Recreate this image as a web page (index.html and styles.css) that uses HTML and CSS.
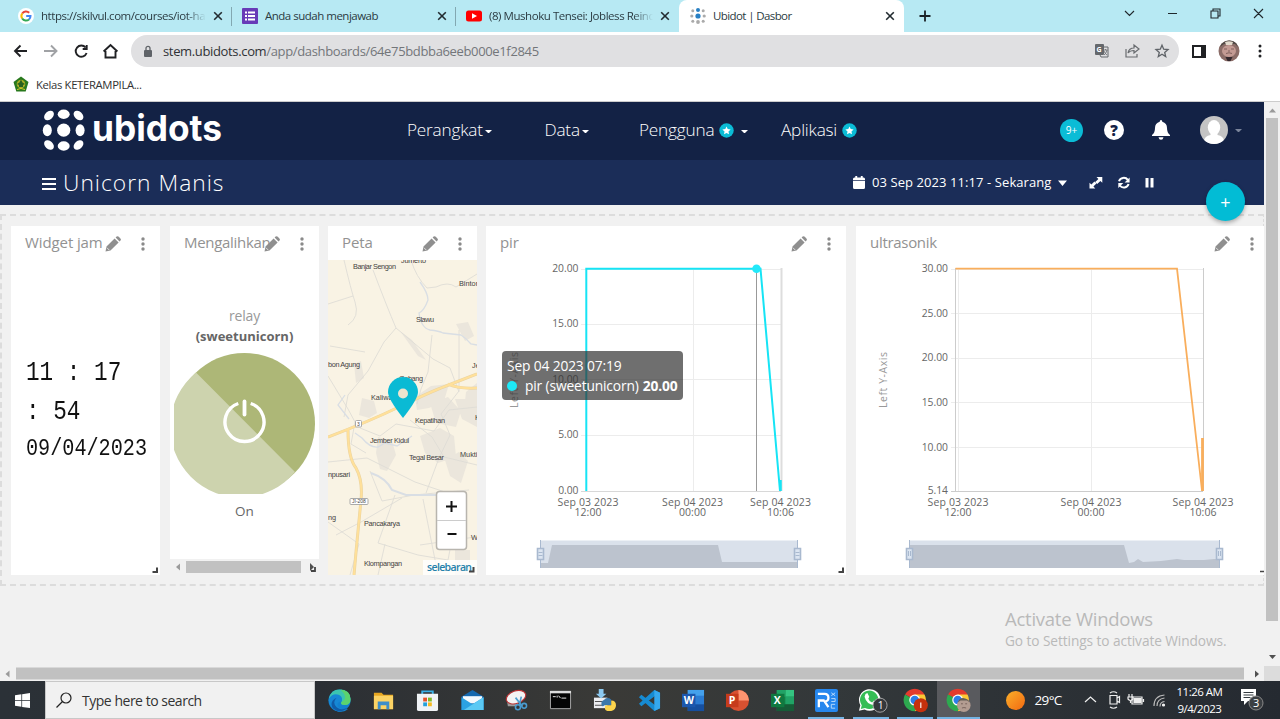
FILE: index.html
```html
<!DOCTYPE html>
<html lang="id">
<head>
<meta charset="utf-8">
<title>Ubidot | Dasbor</title>
<link rel="stylesheet" href="styles.css">
</head>
<body>
<svg class="defs" width="0" height="0">
  <defs>
    <symbol id="x" viewBox="0 0 10 10"><path d="M1.2 1.2l7.6 7.6M8.8 1.2L1.2 8.8" stroke="#222b30" stroke-width="1.6"/></symbol>
    <symbol id="pencil" viewBox="0 0 16 16"><path d="M.5 15.5l1-5L9.600 2.500l4 4L5.500 14.500zM10.600 1.600l1-1q1.100-.8 2.200.2l1.600 1.600q1 1.100.1 2.100l-1 1z" fill="#8f8f8f"/><path d="M2 11.800l2.300 2.300" stroke="#fff" stroke-width=".7"/></symbol>
    <symbol id="dots" viewBox="0 0 4 14"><g fill="#8a8a8a"><circle cx="2" cy="2" r="1.700"/><circle cx="2" cy="7" r="1.700"/><circle cx="2" cy="12" r="1.700"/></g></symbol>
    <symbol id="badge" viewBox="0 0 16 16"><circle cx="8" cy="8" r="7.700" fill="#0bbcd6"/><path d="M8 3.700l1.300 2.800 3.100.4-2.300 2.100.6 3.100L8 10.600l-2.700 1.500.6-3.100-2.300-2.100 3.100-.4z" fill="#fff"/></symbol>
    <symbol id="chrome" viewBox="0 0 24 24"><path d="M12 12L2.100 6.300A11.500 11.500 0 0 1 22 6.300z" fill="#e33b2e"/><path d="M12 12L2.100 6.300A11.500 11.500 0 0 0 12 23.500l5-8.500z" fill="#2da94f"/><path d="M22 6.300H12l5 8.700-5 8.500A11.500 11.500 0 0 0 22 6.300z" fill="#fcc934"/><circle cx="12" cy="12" r="5.600" fill="#fff"/><circle cx="12" cy="12" r="4.400" fill="#2b7de9"/></symbol>
    <symbol id="grip" viewBox="0 0 6 6"><path d="M5 .5V5H.5" fill="none" stroke="#444" stroke-width="2"/></symbol>
  </defs>
</svg>

<header class="tabs">
  <div class="tab t1"><svg class="fav" viewBox="0 0 16 16"><circle cx="8" cy="8" r="8" fill="#fff"/><g fill="none" stroke-width="2"><path d="M4.200 5.500A4.500 4.500 0 0 1 11.200 4.700" stroke="#ea4335"/><path d="M4.200 5.500a4.500 4.500 0 0 0 0 5" stroke="#fbbc05"/><path d="M4.200 10.500a4.500 4.500 0 0 0 6.800.9" stroke="#34a853"/><path d="M11 11.400A4.500 4.500 0 0 0 12.500 8H8.200" stroke="#4285f4"/></g></svg><span class="label fade">https://skilvul.com/courses/iot-ha</span><svg class="close"><use href="#x"/></svg></div>
  <div class="tab t2"><svg class="fav" viewBox="0 0 16 16"><rect width="16" height="16" rx="1" fill="#673ab7"/><path d="M3 4.500h2M3 8h2M3 11.500h2M6 4.500h7M6 8h7M6 11.500h7" stroke="#fff" stroke-width="1.800"/></svg><span class="label">Anda sudah menjawab</span><svg class="close"><use href="#x"/></svg></div>
  <div class="tab t3"><svg class="fav" viewBox="0 0 16 16"><rect y="2.500" width="16" height="11" rx="2.500" fill="#f00"/><path d="M6 5.300l5 2.700-5 2.700z" fill="#fff"/></svg><span class="label fade">(8) Mushoku Tensei: Jobless Reinc</span><svg class="close"><use href="#x"/></svg></div>
  <div class="tab t4"><svg class="fav" viewBox="0 0 16 16"><g fill="#aaa"><circle cx="2.800" cy="2.800" r="1.500"/><circle cx="13.200" cy="2.800" r="1.500"/><circle cx="1.800" cy="8" r="1.600"/><circle cx="14.200" cy="8" r="1.600"/><circle cx="2.800" cy="13.200" r="1.500"/><circle cx="13.200" cy="13.200" r="1.500"/><circle cx="8" cy="14" r="1.900"/></g><circle cx="8" cy="2" r="2" fill="#2980c4"/><circle cx="8" cy="8" r="2.600" fill="#2980c4"/></svg><span class="label">Ubidot | Dasbor</span><svg class="close"><use href="#x"/></svg></div>
  <svg class="plus" viewBox="0 0 12 12"><path d="M6 .5v11M.5 6h11" stroke="#1b2226" stroke-width="1.800"/></svg>
  <svg class="winctl" viewBox="0 0 150 28" fill="none" stroke="#20282c" stroke-width="1.100"><path d="M5 11l4.500 4.500L14 11M48 13.500h9M91 11h7v7h-7zM93 11V9h7v7h-2M134 9l9 9M143 9l-9 9"/></svg>
</header>

<div class="toolbar">
  <svg class="navicons" viewBox="0 0 120 32" fill="none" stroke="#202124" stroke-width="1.900"><path d="M15 16h12M20.500 10.500L15 16l5.500 5.500"/><path d="M44 16h12M51 10.500l5.500 5.500-5.500 5.500" stroke="#a0a2a5"/><path d="M85.600 12.500A5.600 5.600 0 1 0 86.600 18M86.700 10v4h-4"/><path d="M105.500 16v6.500h10V16M103.600 16.500l6.900-6.500 6.900 6.500"/></svg>
  <div class="omnibox">
    <svg class="lock" viewBox="0 0 10 13"><rect x="1" y="5" width="8" height="7" rx="1" fill="#5f6368"/><path d="M3 5V3.300a2 2 0 0 1 4 0V5" fill="none" stroke="#5f6368" stroke-width="1.300"/></svg>
    <span class="url"><b>stem.ubidots.com</b>/app/dashboards/64e75bdbba6eeb000e1f2845</span>
    <svg class="omniicons" viewBox="0 0 80 16"><rect x="1" y="1" width="9" height="11" rx="1" fill="#65686c"/><path d="M8 4h6v10H7l-1-2" fill="none" stroke="#65686c"/><text x="2.500" y="9" class="gx">G</text><path d="M9.500 7h4M11.500 6v1M13 7q-1 4-3 5M10 8q1 3 3 4" stroke="#65686c" stroke-width=".8" fill="none"/><path d="M32 6v8h11v-3M34 10q1-5 6-5V2l5 4-5 4V7.500Q36 7.500 34 10z" fill="none" stroke="#686b6f" stroke-width="1.200"/><path d="M68 2.200l1.700 4 4.300.3-3.300 2.900 1 4.200L68 11.300l-3.700 2.300 1-4.200L62 6.500l4.300-.3z" fill="none" stroke="#5f6368" stroke-width="1.300"/></svg>
  </div>
  <svg class="panel" viewBox="0 0 14 13"><path d="M1 1h12v11H1z" fill="#fff" stroke="#202124" stroke-width="2"/><path d="M9 1h4v11H9z" fill="#202124"/></svg>
  <svg class="face" viewBox="0 0 22 22"><circle cx="11" cy="11" r="10.500" fill="#8b6c67"/><path d="M2 7q2-6 9-6.500T20 7l-3-3H6z" fill="#504a46"/><path d="M7 2q4-1.500 8 0l-1 3H8z" fill="#e2d9cc"/><ellipse cx="11" cy="11" rx="7" ry="6" fill="#c39a93"/><path d="M6 9h3M13 9h3M8 13.500q3-1.500 6 0M10 11h2" stroke="#80605c" stroke-width="1" fill="none"/><path d="M7.500 17h7l-2 4h-3z" fill="#34282d"/></svg>
  <svg class="kebab" viewBox="0 0 4 14"><circle cx="2" cy="2" r="1.500"/><circle cx="2" cy="7" r="1.500"/><circle cx="2" cy="12" r="1.500"/></svg>
</div>
<div class="bookmarks">
  <svg viewBox="0 0 16 16"><path d="M8 .5l7.500 5.600-2.800 9.400H3.300L.5 6.100z" fill="#28791d"/><circle cx="8" cy="8" r="4.300" fill="#a8ae25"/><path d="M8 3.500l1.500 3L12 8l-2 1v2H6V9L4 8l2.500-1.500z" fill="#28621f"/><path d="M4 13.500q4-2 8 0" stroke="#d8c829" fill="none"/></svg><span>Kelas KETERAMPILA...</span>
</div>

<main class="viewport">
  <div class="page">
    <nav class="nav">
      <svg class="logo" viewBox="40 102 190 56"><g fill="#fff"><ellipse cx="63.700" cy="114.300" rx="6" ry="4.700"/><circle cx="63.700" cy="130.200" r="6.600"/><ellipse cx="63.700" cy="146" rx="6" ry="4.700"/><ellipse cx="47.300" cy="130.200" rx="4.500" ry="6"/><ellipse cx="80.100" cy="130.200" rx="4.500" ry="6"/><ellipse cx="49" cy="115.500" rx="5.600" ry="3.900" transform="rotate(-42 49 115.500)"/><ellipse cx="78.500" cy="115.500" rx="5.600" ry="3.900" transform="rotate(42 78.500 115.500)"/><ellipse cx="49" cy="145" rx="5.600" ry="3.900" transform="rotate(42 49 145)"/><ellipse cx="78.500" cy="145" rx="5.600" ry="3.900" transform="rotate(-42 78.500 145)"/><text x="92" y="140.500" textLength="130" lengthAdjust="spacingAndGlyphs" class="brand">ubidots</text></g></svg>
      <a>Perangkat<i class="caret"></i></a>
      <a>Data<i class="caret"></i></a>
      <a>Pengguna<svg class="badge"><use href="#badge"/></svg><i class="caret gap"></i></a>
      <a>Aplikasi<svg class="badge"><use href="#badge"/></svg></a>
      <span class="nine">9+</span>
      <span class="help">?</span>
      <svg class="bell" viewBox="0 0 18 20"><path d="M9 0q1.300 0 1.300 1.700Q15 3 15 8q0 5 3 7v1H0v-1q3-2 3-7 0-5 4.700-6.300Q7.700 0 9 0zM6.500 17.300h5Q11 19.800 9 19.800t-2.500-2.500z" fill="#fff"/></svg>
      <svg class="avatar" viewBox="0 0 28 28"><clipPath id="av"><circle cx="14" cy="14" r="14"/></clipPath><g clip-path="url(#av)"><path d="M0 0h28v28H0z" fill="#c4c4c4"/><ellipse cx="14" cy="11.500" rx="6.200" ry="7.500" fill="#fff"/><path d="M10.500 16h7v3q6 1 6.500 6l-3 4H7l-3-4q.5-5 6.500-6z" fill="#fff"/></g></svg>
      <i class="caret dim"></i>
    </nav>
    <div class="subbar">
      <svg class="burger" viewBox="0 0 14 12"><path d="M0 1h14M0 6h14M0 11h14" stroke="#fff" stroke-width="1.900"/></svg>
      <h1>Unicorn Manis</h1>
      <svg class="cal" viewBox="0 0 12 13"><path d="M0 3q0-1.500 1.500-1.500H2.300V0h1.900v1.500h3.600V0h1.900v1.500h.8Q12 1.500 12 3v1.200H0zM0 5h12v6.500q0 1.500-1.500 1.500h-9Q0 13 0 11.500z" fill="#fff"/></svg>
      <span class="range">03 Sep 2023 11:17 - Sekarang</span>
      <svg class="subicons" viewBox="1056 174 104 18"><g fill="#fff"><path d="M1058 180.500h9l-4.500 5.500zM1096.500 177h5.800v5.800l-1.900-1.900-3.200 3.200-2-2 3.200-3.200zM1089.500 188.500v-5.800l1.900 1.900 3-3 2 2-3 3 1.900 1.900zM1145.500 178h3v9.500h-3zM1150.500 178h3v9.500h-3z"/></g><path d="M1119 181.300a5 5 0 0 1 8.800-1.400M1128.600 184a5 5 0 0 1-8.800 1.500" fill="none" stroke="#fff" stroke-width="2"/><path d="M1129.600 177.500v5h-5zM1118.300 188v-5h5z" fill="#fff"/></svg>
      <button class="fab">+</button>
    </div>

    <section class="board">
      <article class="card clock">
        <h2>Widget jam</h2><svg class="pencil"><use href="#pencil"/></svg><svg class="more"><use href="#dots"/></svg>
        <div class="body"><p>11 : 17</p><p>: 54</p><p class="date">09/04/2023</p></div>
        <svg class="grip"><use href="#grip"/></svg>
      </article>

      <article class="card toggle">
        <h2>Mengalihkan</h2><svg class="pencil"><use href="#pencil"/></svg><svg class="more"><use href="#dots"/></svg>
        <div class="body">
          <p class="dev">relay</p><p class="dev strong">(sweetunicorn)</p>
          <svg class="power" viewBox="0 0 141 141"><circle cx="70.500" cy="70.500" r="70.500" fill="#adb777"/><path d="M22 19.500A70.500 70.500 0 1 0 121 119z" fill="#cdd3ae"/><path d="M64.300 50.500a19.500 19.500 0 1 0 12.400 0" fill="none" stroke="#fff" stroke-width="3.400"/><path d="M70.500 48.500v13" stroke="#fff" stroke-width="3.800" stroke-linecap="round"/></svg>
          <p class="state">On</p>
        </div>
        <svg class="innerscroll" viewBox="0 0 149 16"><path d="M0 0h149v16H0z" fill="#f1f1f1"/><path d="M10 4.500v7L6 8z" fill="#9b9b9b"/><path d="M16 2h115v12H16z" fill="#c1c1c1"/><path d="M140 4v8l4-4z" fill="#505050"/><path d="M145 8v4h-4" fill="none" stroke="#444" stroke-width="1.800"/></svg>
      </article>

      <article class="card">
        <h2>Peta</h2><svg class="pencil"><use href="#pencil"/></svg><svg class="more"><use href="#dots"/></svg>
        <div class="body map">
          <svg viewBox="328 260 149 315" width="149" height="315">
            <path d="M328 260h149v315H328z" fill="#f9f3e4"/>
            <g fill="#ebe6dc"><path d="M362 398l12 3 3 12-8 5-10-3zM378 437l14 4 4 14-9 16-7-2-4-16zM415 397l16-11 18-2-5 17-15 7-12 2zM420 436l20-8 14 8 2 21-18 6-13-10zM455 399h22v28l-15-8zM430 403l18-6 13 14-5 16-20-4zM445 460l14-8 9 9-7 22-11-7zM456 324l12-2 6 14-9 5zM354 364l7-3 3 17-8 5zM466 392l11-9v31l-13-4zM400 331l12 9 14 20-8-4zM455 550h15v25h-15z"/></g>
            <g fill="none" stroke="#dfdcd6" stroke-width=".9"><path d="M344 260q7 30 11 42 5 15-7 23M373 270q14 37 23 58l37 31 17 9 9 24M411 260q5 17 16 28l9-1q12-6 20 0l21-13M432 335l-4 37-7 17-4 15M396 328l-12 14-16 29-20 24-4 22M328 376l20 33 7 13-4 22 15 9M459 330v61l-18 23 9 21-11 23-13 35M477 407l-28 3-15 21-38-7-16 12-20-8M410 420l22 17 12 20 33 8M328 462l39-4 48 24 30 10M395 495l-17 48 40 12 30 5 11-57M402 498l-41 24-25 13M423 499l15 76M328 304l25-8M365 352l-35-6M370 471l12 30 32-6 55-5M328 522l31 22-9 31M385 544l-7 31M420 545l55-8"/></g>
            <g fill="none" stroke="#d9dee4" stroke-width="1.300"><path d="M420 282q8 11 8 18-4 11-9 13 2 15 11 17 9 1 13 3l18 2q5 3 10 9l6 1M345 395l-7 10 11 14M355 433l7 5q8 10 16 9l7-4 12 3 15-10"/><path d="M371 473q15 5 21 17l14 5h31" stroke-width="2"/></g>
            <g fill="none"><path d="M328 437q40-15 73-31 29-14 45-20l31-12M448 384q10 5 29 4M348 430q0 28 8 38 7 13 5 32l-5 52-2 23" stroke="#e9d3a1" stroke-width="3"/><path d="M328 437q40-15 73-31 29-14 45-20l31-12M448 384q10 5 29 4M348 430q0 28 8 38 7 13 5 32l-5 52-2 23" stroke="#ffe09a" stroke-width="2"/></g>
            <g fill="#fff" stroke="#aaa"><rect x="355.500" y="420.500" width="6" height="6.500" rx="1"/><rect x="350" y="498.500" width="18" height="6" rx="1"/></g>
            <g class="maptext"><text x="401" y="262.500" textLength="25">Jumerto</text><text x="353" y="268.500" textLength="43">Banjar Sengon</text><text x="459" y="286">Bintoro</text><text x="416" y="322" textLength="18">Slawu</text><text x="328" y="367" textLength="32">bon Agung</text><text x="472" y="368">Je</text><text x="399" y="380.500" textLength="24">Gebang</text><text x="371" y="399.500">Kaliwates</text><text x="415" y="423" textLength="30">Kepatihan</text><text x="475" y="420">K</text><text x="370" y="443" textLength="39">Jember Kidul</text><text x="409" y="459.500" textLength="35">Tegal Besar</text><text x="460" y="457">Muktiharjo</text><text x="328" y="476.500" textLength="22">npusari</text><text x="328" y="520">ng</text><text x="364" y="525.500" textLength="36">Pancakarya</text><text x="471" y="540">W</text><text x="364" y="566" textLength="38">Klompangan</text><text x="357" y="425.500" class="shield">3</text><text x="352" y="503.300" class="shield">JI-208</text></g>
            <path d="M403 418q-15-19-15-26a15 15 0 0 1 30 0q0 7-15 26z" fill="#0abad4"/><circle cx="403" cy="393.500" r="5" fill="#eee4ce"/>
            <rect x="436.500" y="491.500" width="30" height="58" rx="3" fill="#fff" stroke="#b8b5ae" stroke-width="1.500"/><path d="M437 520.500h29" stroke="#ccc"/><path d="M446 506.500h11M451.500 501v11M447.500 534h9" stroke="#111" stroke-width="2"/>
            <path d="M423 560h54v15h-54z" fill="#fff" opacity=".8"/><text x="427" y="571" textLength="45" class="leaflet">selebaran</text><path d="M473.500 567v4.500H469" fill="none" stroke="#444" stroke-width="2"/>
          </svg>
        </div>
      </article>

      <article class="card chart pir">
        <h2>pir</h2><svg class="pencil"><use href="#pencil"/></svg><svg class="more"><use href="#dots"/></svg>
        <div class="body">
          <svg viewBox="486 260 360 315" width="360" height="315">
            <g stroke="#ececec"><path d="M581 269.500h200M581 324.500h200M581 379.500h200M581 435.500h200M693.500 269v222"/><path d="M581 491.500h200" stroke="#d8d8d8"/><path d="M781.500 268v223" stroke="#ddd" stroke-width="2"/></g>
            <g class="ylab"><text x="578.500" y="272">20.00</text><text x="578.500" y="327">15.00</text><text x="578.500" y="382.500">10.00</text><text x="578.500" y="438">5.00</text><text x="578.500" y="493.500">0.00</text></g>
            <g class="xlab"><text x="588" y="506" textLength="61">Sep 03 2023</text><text x="588" y="516">12:00</text><text x="692.500" y="506" textLength="61">Sep 04 2023</text><text x="692.500" y="516">00:00</text><text x="780.500" y="506" textLength="61">Sep 04 2023</text><text x="780.500" y="516">10:06</text></g>
            <text class="axis" transform="translate(518 380) rotate(-90)" textLength="56">Left Y-Axis</text>
            <path d="M756.500 269v222" stroke="#999"/>
            <path d="M586.300 491V268.700H760.500L780 491" fill="none" stroke="#16e4f5" stroke-width="2"/><path d="M780.500 480v11" stroke="#16e4f5" stroke-width="2.500"/><circle cx="756.500" cy="268.800" r="4.300" fill="#22e9fa"/>
            <path d="M540 540.500h258V568H540z" fill="#dae1eb"/><path d="M540 563h8l4-18h166l4 17h76v6H540z" fill="#bcc3ce"/><g stroke="#a9b9cf" fill="#dce5f1"><path d="M540.500 540v28M797.500 540v28"/><path d="M537.500 548.500h6v11h-6zM794.500 548.500h6v11h-6z" stroke-width="1.600"/><path d="M538.500 552.500h4M538.500 555.500h4M795.500 552.500h4M795.500 555.500h4"/></g>
          </svg>
          <div class="tooltip"><p>Sep 04 2023 07:19</p><p class="row"><i></i><span>pir (sweetunicorn)</span> <b>20.00</b></p></div>
        </div>
        <svg class="grip"><use href="#grip"/></svg>
      </article>

      <article class="card chart ultra">
        <h2>ultrasonik</h2><svg class="pencil"><use href="#pencil"/></svg><svg class="more"><use href="#dots"/></svg>
        <div class="body">
          <svg viewBox="856 260 408 315" width="408" height="315">
            <g stroke="#ececec"><path d="M951 269.500h252M951 313.500h252M951 358.500h252M951 402.500h252M951 447.500h252M1091.500 269v222M958.500 269v222"/><path d="M951 491.500h252M955.500 268v223M1203.500 268v223" stroke="#ccc"/></g>
            <g class="ylab"><text x="948" y="272">30.00</text><text x="948" y="316.500">25.00</text><text x="948" y="361">20.00</text><text x="948" y="406">15.00</text><text x="948" y="450.500">10.00</text><text x="948" y="493.500">5.14</text></g>
            <g class="xlab"><text x="958" y="506" textLength="61">Sep 03 2023</text><text x="958" y="516">12:00</text><text x="1091" y="506" textLength="61">Sep 04 2023</text><text x="1091" y="516">00:00</text><text x="1203" y="506" textLength="61">Sep 04 2023</text><text x="1203" y="516">10:06</text></g>
            <text class="axis" transform="translate(887 380) rotate(-90)" textLength="56">Left Y-Axis</text>
            <path d="M955.500 268.700H1177L1202 490.500" fill="none" stroke="#f9ae5c" stroke-width="1.800"/><path d="M1202.500 438v53" stroke="#f9ae5c" stroke-width="2.800"/>
            <path d="M909 540.500h311V568H909z" fill="#dae1eb"/><path d="M909 545h215l5 18 5-1 4-3 5 3 18-1 8-1 8-1 7 1h20l10-1h6V568H909z" fill="#bcc3ce"/><g stroke="#a9b9cf" fill="#dce5f1"><path d="M909.500 540v28M1219.500 540v28"/><path d="M906.500 548.500h6v11h-6zM1216.500 548.500h6v11h-6z" stroke-width="1.600"/><path d="M908.500 551v5M910.500 551v5M1218.500 551v5M1220.500 551v5"/></g>
            <path d="M1260 571.500h4" stroke="#444" stroke-width="1.500"/>
          </svg>
        </div>
      </article>
    </section>
    <aside class="activate"><p>Activate Windows</p><small>Go to Settings to activate Windows.</small></aside>
  </div>
  <svg class="vbar" viewBox="0 0 16 563"><path d="M0 0h16v563H0z" fill="#f1f1f1"/><path d="M5 10.500h7L8.500 6.500z" fill="#9a9a9a"/><path d="M2 16h12v503H2z" fill="#c1c1c1"/><path d="M5 553h7l-3.500 4z" fill="#505050"/></svg>
  <svg class="hbar" viewBox="0 0 1280 16"><path d="M0 0h1280v16H0z" fill="#f1f1f1"/><path d="M9.500 4.500v7l-4-3.500z" fill="#9a9a9a"/><path d="M16 1.500h1228v12H16z" fill="#c1c1c1"/><path d="M1255 4.500v7l4-3.500z" fill="#505050"/><path d="M1264 0h16v16h-16z" fill="#dcdcdc"/></svg>
</main>

<footer class="taskbar">
  <div class="start"><svg viewBox="0 0 16 16" width="15" height="15"><path d="M0 2.300l6.800-1v6.300H0zM7.600 1.200L16 0v7.600H7.600zM0 8.400h6.800v6.300L0 13.700zM7.600 8.400H16V16l-8.400-1.200z" fill="#fff"/></svg></div>
  <div class="search"><svg viewBox="0 0 16 16"><circle cx="10" cy="6" r="5" fill="none" stroke="#222" stroke-width="1.200"/><path d="M6.500 9.500L.5 15.500" stroke="#222" stroke-width="1.300"/></svg><span>Type here to search</span></div>
  <div class="apps">
    <div><svg viewBox="0 0 24 24"><circle cx="12" cy="12" r="11.500" fill="#1280cf"/><path d="M1 10Q3 .5 12 .5q11 0 11.500 10 0 6-6 6-5 0-3.500-3 2-5-3-6Q5 7 1 12z" fill="#3bc5b0"/><path d="M13 .6q10.500 1 10.500 10 0 6-6 6-5 0-3.500-3 8-4-1-13z" fill="#5bd36e"/><path d="M1 10q4-6 10-4 5 2 3 7-3 0-4 2-1 5 6 6h5Q12 27 5 20 0 15 1 10z" fill="#1688d5"/><path d="M9 9q-5 5 0 10 5 4 12 0-8 8-16 1-4-7 4-11z" fill="#105ca8"/></svg></div>
    <div><svg viewBox="0 0 24 24"><path d="M2 4h8l2 2h10v15H2z" fill="#e7a620"/><path d="M2 7h20v14H2z" fill="#fcd364"/><path d="M6 21v-8h12v8h-3v-4H9v4z" fill="#3e8ec9"/></svg></div>
    <div><svg viewBox="0 0 24 24"><path d="M6.500 7V2.500h11V7" fill="none" stroke="#39b1e8" stroke-width="2"/><path d="M1 5h22v16q0 2-2 2H3q-2 0-2-2z" fill="#f0f3f6"/><path d="M7.500 9h4v4h-4z" fill="#e4532a"/><path d="M12.500 9h4v4h-4z" fill="#80b928"/><path d="M7.500 14h4v4h-4z" fill="#24a0da"/><path d="M12.500 14h4v4h-4z" fill="#f6b91e"/></svg></div>
    <div><svg viewBox="0 0 24 24"><path d="M.5 8L12 1l11.500 7v14H.5z" fill="#1568ae"/><path d="M2 7.500h20V15H2z" fill="#f4f9fd"/><path d="M.5 8.500L12 16l11.500-7.500V22H.5z" fill="#2ba2e3"/><path d="M23.500 8.500V22H3z" fill="#5bc9f4"/></svg></div>
    <div><svg viewBox="0 0 24 24"><path d="M2 12l1 6h9l3-5z" fill="#9a9a9a"/><ellipse cx="11.500" cy="8.500" rx="10.500" ry="6.500" fill="#f4f4f4" stroke="#b93335" stroke-width="1.200" transform="rotate(-20 11.500 8.500)"/><path d="M11 9l7 9M17 8l-2 9" stroke="#4c9fd1" stroke-width="1.700"/><circle cx="13.500" cy="19" r="2.600" fill="none" stroke="#4a9bd0" stroke-width="1.600"/><circle cx="20" cy="17.500" r="2.500" fill="none" stroke="#4a9bd0" stroke-width="1.600"/></svg></div>
    <div><svg viewBox="0 0 24 24"><path d="M1.500 2.500h21v18h-21z" fill="#050505" stroke="#aaa"/><path d="M1 2h22v2.500H1z" fill="#ddd"/><path d="M4 8h3M8.500 7v2M10 7l2 2.500M13 9.500h5" stroke="#eee"/></svg></div>
    <div><svg viewBox="0 0 24 24"><path d="M1 9h14v11H1z" fill="#ecedf0"/><path d="M2 13h8M2 17h8" stroke="#555" stroke-width="1.200"/><path d="M6 0h5v5h3l-5.500 5L3 5h3z" fill="#8cc9f0"/><path d="M12 11q3-3 7 0v6h-7q-4 3-3-4z" fill="#3c78aa"/><path d="M13 17h6v-5q5 0 5 5t-5 6h-4q-4-1-2-6z" fill="#fcd44d"/></svg></div>
    <div><svg viewBox="0 0 24 24"><path d="M17 1l6 3v16l-6 3L1 8.500 3.500 6 18 17V7L3.500 18 1 15.500z" fill="#168bd2"/><path d="M17 1l6 3v16l-6 3z" fill="#35a8ee"/></svg></div>
    <div><svg viewBox="0 0 24 24"><path d="M6 1h17v22H6z" fill="#2b7cd3"/><path d="M6 1h17v6H6z" fill="#45a1ec"/><path d="M6 16h17v7H6z" fill="#164f9f"/><path d="M0 5h14v14H0z" fill="#1c57ad"/><text x="1.800" y="16" class="ico">W</text></svg></div>
    <div><svg viewBox="0 0 24 24"><circle cx="13" cy="12" r="11" fill="#d85131"/><path d="M13 1a11 11 0 0 1 11 11H13z" fill="#ff9470"/><path d="M0 5h13v14H0z" fill="#c63b1c"/><text x="2.800" y="16" class="ico">P</text></svg></div>
    <div><svg viewBox="0 0 24 24"><path d="M6 1h18v22H6z" fill="#148449"/><path d="M15 1h9v7h-9z" fill="#35c481"/><path d="M6 1h9v7H6zM15 8h9v8h-9z" fill="#21a366"/><path d="M6 16h18v7H6z" fill="#165c37"/><path d="M0 5h14v14H0z" fill="#107940"/><text x="2.800" y="16" class="ico">X</text></svg></div>
    <div class="open"><svg viewBox="0 0 24 24"><rect width="24" height="24" rx="2" fill="#2687ee"/><path d="M3 5h7q4 0 4 4t-4 4l4 6M4 19V12h6" fill="none" stroke="#fff" stroke-width="2.400"/><path d="M17 4l4 3M21 4l-4 3M17 10h4v3h-4M21 16h-4v4h4" fill="none" stroke="#b9d9fa" stroke-width="1"/></svg></div>
    <div class="open"><svg class="wide" viewBox="0 0 32 26"><path d="M1 24l1.500-6A11.500 11.500 0 1 1 7 22.500z" fill="#fff"/><path d="M3 22l1-4a9.800 9.800 0 1 1 3.500 3z" fill="#35bd55"/><path d="M8 6l2-1 2 4-1 2q1 3 4 4l2-2 4 2q0 3-4 3-8-1-10-9z" fill="#fff"/><circle cx="23.500" cy="18" r="7.500" fill="#35383c" stroke="#aaa"/><text x="21" y="22" class="count">1</text></svg></div>
    <div class="open"><svg class="wide" viewBox="0 0 32 26"><use href="#chrome" x="0" y="0" width="25" height="25"/><circle cx="19" cy="18" r="7.500" fill="#c5300d"/><path d="M19 15v6" stroke="#fff" stroke-width="1.200"/></svg></div>
    <div class="open active"><svg class="wide" viewBox="0 0 32 26"><use href="#chrome" x="0" y="0" width="25" height="25"/><circle cx="19" cy="18" r="7.200" fill="#b39c91"/><path d="M12.500 15q2-5 6.500-4.500t6.500 4.500l-3-2h-7z" fill="#655f57"/><path d="M16 16.500h2M20.500 16.500h2M17 21q2-1 4.500 0" stroke="#75605a" fill="none"/></svg></div>
  </div>
  <i class="sun"></i><span class="temp">29°C</span>
  <svg class="tray" viewBox="1080 685 92 32" fill="none" stroke="#eee" stroke-width="1.200"><path d="M1086 703l5.500-5 5.500 5M1111 696.500h7v8.500h-7zM1118 699l2.500-1.500v6L1118 702M1111 694q3.500-2.500 7 0M1111 708q3.500 2.500 7 0M1133 698h10v7h-10zM1144.500 700v3"/><path d="M1135 699.500h7v4h-7z" fill="#eee"/><path d="M1130 695v3M1133 695v3M1129 698h5v2q-2.500 3-5 0zM1131.500 701v3" /><g stroke="#bbb"><path d="M1155 707q0-10 10.500-11M1158 707q0-7 7.500-8M1161 707.500q0-4.500 4.500-5"/></g><circle cx="1164.500" cy="706" r="1" fill="#fff"/></svg>
  <div class="time">11:26 AM<br>9/4/2023</div>
  <svg class="notif" viewBox="0 0 26 26"><path d="M1 2h15v12H8l-4 4v-4H1z" fill="#fff"/><path d="M3.500 5.500h10M3.500 8h10M3.500 10.500h7" stroke="#333a3f"/><circle cx="16" cy="16" r="7" fill="#3b3f43" stroke="#888"/><text x="13" y="20" class="count">3</text></svg>
</footer>
</body>
</html>
```
FILE: styles.css
```css
* { box-sizing: border-box; }
body { margin: 0; width: 1280px; height: 719px; overflow: hidden; display: flex; flex-direction: column; background: #fff; font-family: "Open Sans", "Noto Sans", sans-serif; color: #333; }
p, h1, h2 { margin: 0; font-weight: 400; }
svg { display: block; flex: none; }
.defs { position: absolute; }

.tabs { height: 32px; flex: none; background: #b7e9f3; display: flex; align-items: center; font-size: 11.5px; letter-spacing: -.45px; }
.tab { height: 32px; display: flex; align-items: center; position: relative; white-space: nowrap; }
.t1 { width: 232px; padding-left: 18px; }
.t2 { width: 224px; padding-left: 10px; letter-spacing: -.5px; }
.t3 { width: 223px; padding-left: 10px; }
.t4 { width: 225px; padding-left: 11px; background: #fff; border-radius: 8px 8px 0 0; letter-spacing: -.6px; }
.t1::after, .t2::after { content: ""; width: 1px; height: 19px; background: #82a8b1; position: absolute; right: 0; top: 7px; }
.fav { width: 16px; height: 16px; margin-right: 7px; }
.label { flex: 1; overflow: hidden; color: #2b3b42; padding-bottom: 1px; }
.fade { -webkit-mask-image: linear-gradient(90deg, #000 88%, transparent); mask-image: linear-gradient(90deg, #000 88%, transparent); }
.close { width: 10px; height: 10px; margin: 0 9px 0 7px; }
.plus { width: 12px; height: 12px; margin-left: 15px; }
.winctl { width: 150px; height: 28px; margin: 0 10px 4px auto; }

.toolbar { height: 37px; flex: none; display: flex; align-items: center; padding-top: 1px; }
.navicons { width: 120px; height: 32px; }
.omnibox { margin-left: 11px; width: 1048px; height: 32px; background: #e0e0e2; border-radius: 16px; display: flex; align-items: center; padding: 0 5px 0 12px; }
.lock { width: 10px; height: 13px; margin-right: 10px; }
.url { font-size: 13px; letter-spacing: -.35px; color: #73767a; }
.url b { font-weight: 400; color: #303236; }
.omniicons { width: 80px; height: 16px; margin-left: auto; }
.gx { font-size: 7px; font-weight: 700; fill: #fff; }
.panel { width: 14px; height: 13px; margin-left: 13px; }
.face { width: 22px; height: 22px; margin-left: 12px; }
.kebab { width: 4px; height: 14px; margin-left: 18px; fill: #202124; }
.bookmarks { height: 32px; flex: none; display: flex; align-items: center; padding: 0 0 2px 13px; gap: 7px; font-size: 11.3px; letter-spacing: -.35px; }
.bookmarks svg { width: 16px; height: 16px; }

.viewport { height: 580px; flex: none; display: grid; grid-template: 564px 16px / 1264px 16px; border-top: 1px solid #ccc; background: #f1f1f1; }
.page { overflow: hidden; background: #f1f1f1; }
.vbar { width: 16px; height: 563px; }
.hbar { width: 1280px; height: 16px; grid-column: 1 / 3; }

.nav { height: 58px; background: #132245; color: #fff; display: grid; grid-template-columns: 367px 137.5px 94.5px 142px 279px 44px 48px 48px 35px 10px; padding: 0 0 2px 40px; align-items: center; position: relative; box-shadow: 0 1px 4px rgba(0,0,0,.3); }
.logo { width: 190px; height: 56px; }
.brand { font: 700 36px Inter, sans-serif; fill: #fff; }
.nav a { display: flex; align-items: center; font-size: 17.2px; font-weight: 300; letter-spacing: -.2px; padding-bottom: 2px; }
.caret { border: 3.5px solid transparent; border-top-color: #fff; border-bottom: 0; margin: 4px 0 0 2px; width: 7px; }
.gap { margin-left: 7px; }
.dim { border-top-color: #7b859b; margin: 0; }
.badge { width: 15px; height: 15px; margin: 3px 0 0 5px; }
.nine { width: 23px; height: 23px; border-radius: 50%; background: #0bbcd6; font-size: 10px; line-height: 22px; text-align: center; }
.help { width: 20px; height: 20px; border-radius: 50%; background: #fff; color: #132245; font: 800 15px/20px "Open Sans", sans-serif; text-align: center; }
.bell { width: 18px; height: 20px; }
.avatar { width: 28px; height: 28px; }

.subbar { height: 45px; background: #1b2d58; color: #fff; display: flex; align-items: center; padding-left: 42px; position: relative; }
.burger { width: 14px; height: 12px; margin: 2px 7px 0 0; }
h1 { width: 789px; font: 300 22.8px/44px "Open Sans", sans-serif; letter-spacing: 1px; }
.cal { width: 12px; height: 13px; margin: 0 7px 0 1px; }
.range { width: 184px; font-size: 13px; letter-spacing: .08px; white-space: nowrap; padding-bottom: 1px; }
.subicons { width: 104px; height: 18px; }
.fab { position: absolute; left: 1206px; top: 22px; width: 39px; height: 39px; border: 0; border-radius: 50%; background: #02bcd5; color: #fff; font: 18px/38px "Open Sans", sans-serif; padding: 0; box-shadow: 0 2px 4px rgba(0,0,0,.3); }

.board { margin-top: 9px; height: 372px; border: 2px dashed #dcdcdc; border-right-width: 1px; padding: 10px 0 0 9px; display: grid; grid-template: 349px / 159px 158px 158px 370px 408px; }
.card { background: #fff; width: 149px; height: 349px; display: grid; grid-template: 34px 315px / minmax(0, 1fr) 16px 20px 4px 15px; position: relative; }
.pir { width: 360px; }
.card h2 { grid-row: 1; grid-column: 1; font: 15px/34px "Open Sans", sans-serif; letter-spacing: -.1px; color: #929292; padding: 0 0 2px 14px; line-height: 32px; white-space: nowrap; }
.toggle h2 { letter-spacing: -.3px; }
.pencil { grid-row: 1; grid-column: 2; width: 16px; height: 16px; margin-top: 10px; position: relative; }
.more { grid-row: 1; grid-column: 4; width: 4px; height: 14px; margin-top: 11px; }
.ultra { width: 408px; grid-template-columns: minmax(0, 1fr) 16px 20px 4px 10px; }
.ultra h2 { letter-spacing: -.3px; }
.body { grid-column: 1 / -1; grid-row: 2; overflow: hidden; }
.grip { position: absolute; right: 2px; bottom: 2px; width: 6px; height: 6px; }
.clock .body { padding: 94px 0 0 15px; }
.clock p { font: 27px/38.5px "Liberation Mono", monospace; color: #111; white-space: pre; transform: scaleX(.84); transform-origin: 0 0; }
.clock .date { font-size: 24px; line-height: 35px; }
.toggle .body { padding-top: 46px; text-align: center; }
.dev { font-size: 14px; line-height: 20px; color: #999; letter-spacing: -.2px; }
.strong { font-size: 13px; font-weight: 700; color: #666; letter-spacing: 0; }
.power { width: 141px; height: 141px; margin: 7px 0 0 4px; }
.state { font-size: 13.5px; line-height: 20px; margin-top: 7px; color: #666; }
.innerscroll { position: absolute; left: 0; bottom: 0; width: 149px; height: 16px; }

.maptext { font: 7.3px "Liberation Sans", Arial, sans-serif; fill: #44423f; }
.maptext .shield { font-size: 5px; }
.leaflet { font: 600 10.5px "Open Sans", sans-serif; fill: #2480aa; }
.ylab { font-size: 10.3px; fill: #666; text-anchor: end; }
.xlab { font-size: 10.5px; fill: #666; text-anchor: middle; }
.axis { font-size: 10.5px; fill: #999; text-anchor: middle; }
.chart .body { position: relative; }
.tooltip { position: absolute; left: 16px; top: 91px; width: 181px; height: 49px; border-radius: 4px; background: rgba(50,50,50,.7); color: #fff; padding: 5px; font-size: 13.8px; line-height: 20px; letter-spacing: -.15px; white-space: nowrap; }
.tooltip .row { display: flex; align-items: center; }
.tooltip i { width: 10px; height: 10px; border-radius: 50%; background: #1de9f8; margin-right: 8px; }
.tooltip b { margin-left: 4px; }

.activate { margin: 20px 0 0 1005px; color: #b9b9b9; }
.activate p { font-size: 18.5px; line-height: 26px; letter-spacing: -.25px; }
.activate small { display: block; font-size: 13.7px; line-height: 17px; letter-spacing: -.08px; white-space: nowrap; }

.taskbar { height: 38px; flex: none; background: linear-gradient(90deg, #2b3137, #2b2f34 25%, #3a3a37 48%, #33383a 65%, #252a31); display: flex; align-items: center; color: #fff; position: relative; }
.start { width: 45px; display: flex; justify-content: center; }
.search { width: 270px; height: 38px; background: #f1f1f1; border: 1px solid #c8c8c8; display: flex; align-items: center; padding-left: 10px; gap: 10px; color: #333; font-size: 14px; letter-spacing: -.5px; }
.search span { letter-spacing: -.48px; }
.search svg { width: 16px; height: 16px; }
.apps { display: grid; grid-template-columns: repeat(15, 44.3px); margin-left: 2px; }
.apps div { height: 38px; display: flex; align-items: center; justify-content: center; }
.apps svg { width: 23px; height: 23px; }
.apps .wide { width: 30px; height: 25px; margin-left: 5px; }
.open { background: linear-gradient(#74b3e3, #74b3e3) bottom / 36px 2px no-repeat; }
.apps .active { background-color: #595a5e; background-size: 100% 2px; width: 43px; }
.ico { font: 700 11px "Open Sans", sans-serif; fill: #fff; }
.count { font: 11px "Open Sans", sans-serif; fill: #fff; }
.sun { width: 19px; height: 19px; border-radius: 50%; background: linear-gradient(135deg, #fcb02a, #f26911); margin-left: 25px; }
.temp { width: 45px; margin-left: 9px; font-size: 13.5px; letter-spacing: -.6px; }
.tray { width: 92px; height: 32px; }
.time { width: 56px; text-align: center; font-size: 11.5px; line-height: 17px; letter-spacing: -.5px; white-space: nowrap; }
.notif { width: 26px; height: 26px; margin-left: 13px; }
```
